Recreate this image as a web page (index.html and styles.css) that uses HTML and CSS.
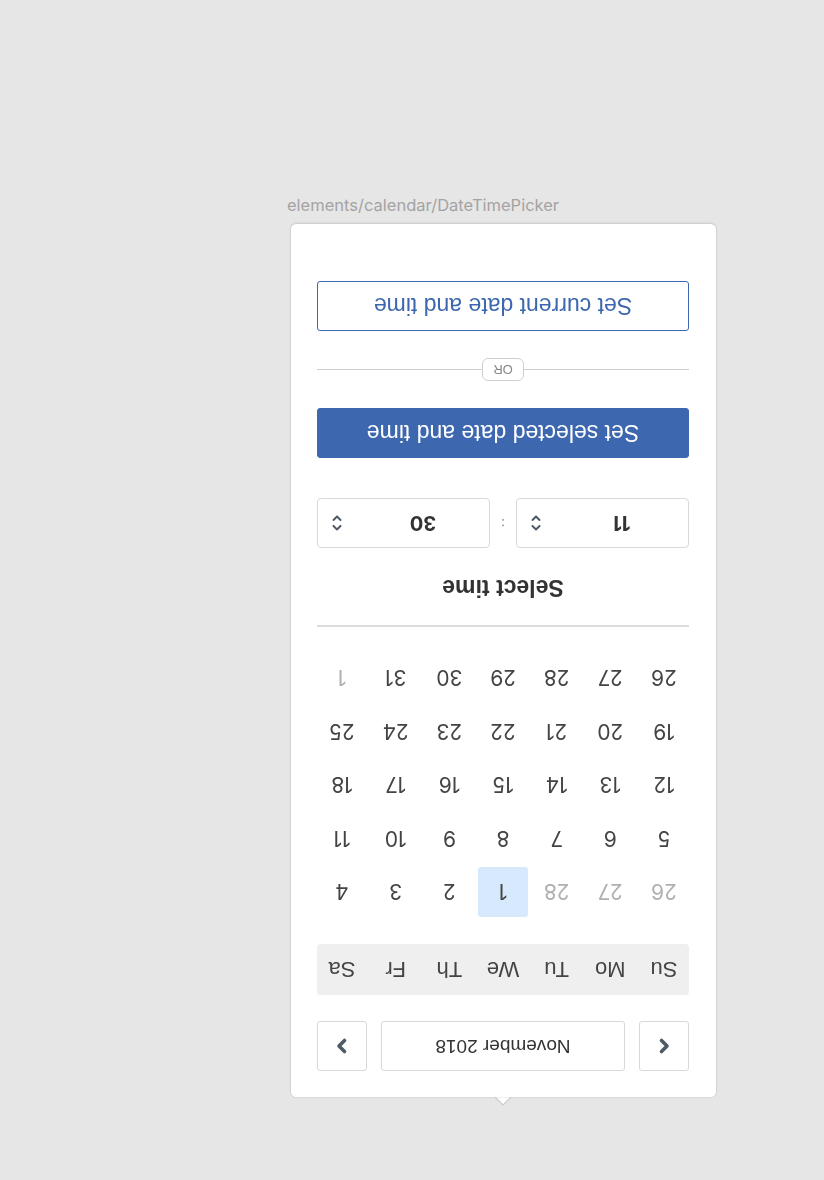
FILE: index.html
```html
<!DOCTYPE html>
<html>
<head>
<meta charset="utf-8">
<link rel="stylesheet" href="styles.css">
</head>
<body>
<div class="page">
  <div class="label">elements/calendar/DateTimePicker</div>
  <div class="card">
    <div class="nav">
      <button class="navbtn" aria-label="Previous month">
        <svg width="20" height="20" viewBox="0 0 20 20"><path d="M12.5 4.5 L7 10 L12.5 15.5" fill="none" stroke="#4e5a66" stroke-width="3.6" stroke-linecap="round" stroke-linejoin="round"/></svg>
      </button>
      <div class="month">November 2018</div>
      <button class="navbtn" aria-label="Next month">
        <svg width="20" height="20" viewBox="0 0 20 20"><path d="M7.5 4.5 L13 10 L7.5 15.5" fill="none" stroke="#4e5a66" stroke-width="3.6" stroke-linecap="round" stroke-linejoin="round"/></svg>
      </button>
    </div>
    <div class="weekdays">
      <span>Su</span><span>Mo</span><span>Tu</span><span>We</span><span>Th</span><span>Fr</span><span>Sa</span>
    </div>
    <div class="days">
      <span class="muted">26</span><span class="muted">27</span><span class="muted">28</span><span class="sel">1</span><span>2</span><span>3</span><span>4</span>
      <span>5</span><span>6</span><span>7</span><span>8</span><span>9</span><span>10</span><span>11</span>
      <span>12</span><span>13</span><span>14</span><span>15</span><span>16</span><span>17</span><span>18</span>
      <span>19</span><span>20</span><span>21</span><span>22</span><span>23</span><span>24</span><span>25</span>
      <span>26</span><span>27</span><span>28</span><span>29</span><span>30</span><span>31</span><span class="muted">1</span>
    </div>
    <div class="divider"></div>
    <div class="title">Select time</div>
    <div class="time">
      <div class="field">
        <span class="value">11</span>
        <svg class="spin" width="12" height="20" viewBox="0 0 12 20"><path d="M2.5 7 L6 3.5 L9.5 7 M2.5 13 L6 16.5 L9.5 13" fill="none" stroke="#4e5a66" stroke-width="2" stroke-linecap="round" stroke-linejoin="round"/></svg>
      </div>
      <span class="colon">:</span>
      <div class="field">
        <span class="value">30</span>
        <svg class="spin" width="12" height="20" viewBox="0 0 12 20"><path d="M2.5 7 L6 3.5 L9.5 7 M2.5 13 L6 16.5 L9.5 13" fill="none" stroke="#4e5a66" stroke-width="2" stroke-linecap="round" stroke-linejoin="round"/></svg>
      </div>
    </div>
    <button class="btn primary">Set selected date and time</button>
    <div class="or"><span>OR</span></div>
    <button class="btn secondary">Set current date and time</button>
  </div>
  <svg class="tip" width="20" height="11" viewBox="0 0 20 11"><path d="M1 0 L10 9 L19 0" fill="#ffffff" stroke="#cbcbcb" stroke-width="1.2"/><rect x="0" y="0" width="20" height="1.2" fill="#ffffff"/></svg>
</div>
</body>
</html>
```

FILE: styles.css
```css
html, body {
  margin: 0;
  padding: 0;
  background: #e6e6e6;
}
.page {
  padding: 195px 0 0 287px;
  font-family: Inter, "Liberation Sans", sans-serif;
}
.label {
  font-size: 16.5px;
  line-height: 20px;
  color: #a3a3a3;
}
.card {
  margin: 9px 0 0 4px;
  width: 425px;
  height: 873px;
  box-sizing: border-box;
  padding: 26px 26px 0 27px;
  background: #fff;
  border-radius: 5px;
  box-shadow: 0 0 2px rgba(0,0,0,0.2), 0 1px 3px rgba(0,0,0,0.08);
  transform: rotate(180deg);
  display: flex;
  flex-direction: column;
}
.tip {
  display: block;
  margin: -1px 0 0 206px;
}
.nav {
  display: flex;
  gap: 14px;
  height: 50px;
}
.navbtn {
  width: 50px;
  height: 50px;
  padding: 0;
  border: 1px solid #d9d9d9;
  border-radius: 3px;
  background: #fff;
  display: flex;
  align-items: center;
  justify-content: center;
}
.month {
  flex: 1;
  border: 1px solid #d9d9d9;
  border-radius: 3px;
  display: flex;
  align-items: center;
  justify-content: center;
  font-family: "Liberation Sans", Arial, sans-serif;
  font-size: 19px;
  color: #333;
}
.weekdays {
  margin-top: 26px;
  height: 51px;
  background: #efefef;
  border-radius: 4px;
  display: grid;
  grid-template-columns: repeat(7, 50px);
  justify-content: space-between;
  align-items: center;
  font-family: "Liberation Sans", Arial, sans-serif;
  font-size: 22px;
  color: #444;
}
.weekdays span {
  text-align: center;
}
.days {
  margin-top: 27px;
  display: grid;
  grid-template-columns: repeat(7, 50px);
  grid-auto-rows: 50px;
  row-gap: 3.5px;
  justify-content: space-between;
  font-size: 21px;
  color: #444;
}
.days span {
  display: flex;
  align-items: center;
  justify-content: center;
  border-radius: 3px;
}
.days .muted {
  color: #b0b0b0;
}
.days .sel {
  background: #d7e9fc;
}
.divider {
  margin-top: 26px;
  height: 2px;
  background: #dcdcdc;
}
.title {
  margin-top: 24px;
  text-align: center;
  font-family: "Liberation Sans", Arial, sans-serif;
  font-weight: bold;
  font-size: 23px;
  line-height: 26px;
  color: #333;
}
.time {
  margin-top: 27px;
  display: flex;
  align-items: center;
  height: 50px;
}
.field {
  flex: 1;
  height: 50px;
  box-sizing: border-box;
  border: 1px solid #d9d9d9;
  border-radius: 4px;
  display: flex;
  align-items: center;
  padding: 0 13px 0 0;
}
.value {
  flex: 1;
  text-align: center;
  font-weight: bold;
  font-size: 20px;
  color: #333;
  padding-right: 14px;
}
.colon {
  width: 26px;
  text-align: center;
  color: #888;
  font-size: 14px;
  margin-top: -4px;
}
.btn {
  height: 50px;
  width: 100%;
  border-radius: 3px;
  font-family: "Liberation Sans", Arial, sans-serif;
  font-size: 23px;
  cursor: pointer;
}
.primary {
  margin-top: 40px;
  background: #3d67ae;
  border: 1px solid #3d67ae;
  color: #fff;
}
.or {
  position: relative;
  margin-top: 27px;
  height: 23px;
  display: flex;
  align-items: center;
  justify-content: center;
}
.or::before {
  content: "";
  position: absolute;
  left: 0;
  right: 0;
  top: 11px;
  height: 1px;
  background: #cfcfcf;
}
.or span {
  position: relative;
  width: 42px;
  height: 23px;
  box-sizing: border-box;
  border: 1px solid #cfcfcf;
  border-radius: 6px;
  background: #fff;
  font-family: "Liberation Sans", Arial, sans-serif;
  font-size: 13px;
  line-height: 21px;
  text-align: center;
  color: #888;
}
.secondary {
  margin-top: 27px;
  background: #fff;
  border: 1px solid #3d67ae;
  color: #3d67ae;
}
```
